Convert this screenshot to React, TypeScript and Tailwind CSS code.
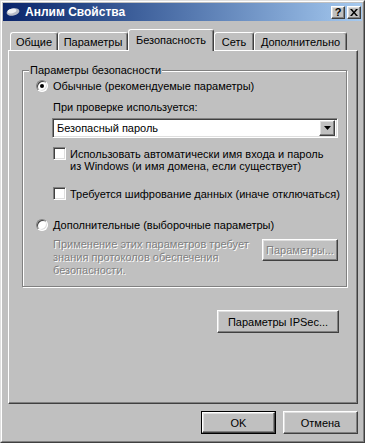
import React from "react";

const raised =
  "border border-t-white border-l-white border-r-[#404040] border-b-[#404040] shadow-[inset_-1px_-1px_0_#808080,inset_1px_1px_0_#dfdfdf]";
const sunken =
  "border border-t-[#808080] border-l-[#808080] border-r-white border-b-white shadow-[inset_1px_1px_0_#404040,inset_-1px_-1px_0_#dfdfdf]";
const disabled = "text-[#808080] [text-shadow:1px_1px_0_#fff]";

function Radio({ checked }: { checked?: boolean }) {
  return (
    <span className="relative flex h-[12px] w-[12px] shrink-0 items-center justify-center rounded-full border border-t-[#808080] border-l-[#808080] border-r-white border-b-white bg-white shadow-[inset_1px_1px_0_#404040,inset_-1px_-1px_0_#dfdfdf]">
      {checked && <span className="h-[4px] w-[4px] rounded-full bg-black" />}
    </span>
  );
}

function Checkbox() {
  return <span className={`h-[13px] w-[13px] shrink-0 bg-white ${sunken}`} />;
}

function Tab({ label, w, active }: { label: string; w: string; active?: boolean }) {
  return (
    <div
      className={`flex items-center justify-center whitespace-nowrap rounded-t-[3px] border border-b-0 border-t-white border-l-white border-r-[#404040] shadow-[inset_-1px_0_0_#808080] bg-[#c0c0c0] ${w} ${
        active ? "relative z-10 -mb-px h-[22px] pb-[2px]" : "h-[18px]"
      }`}
    >
      {label}
    </div>
  );
}

export default function App() {
  return (
    <div className="box-border h-[443px] w-[365px] whitespace-nowrap border border-t-[#dfdfdf] border-l-[#dfdfdf] border-r-[#404040] border-b-[#404040] bg-[#c0c0c0] font-['Liberation_Sans',Arial,sans-serif] text-[11px] leading-[12px] text-black">
      <div className="flex h-full flex-col border border-t-white border-l-white border-r-[#808080] border-b-[#808080] p-px">
        {/* title bar */}
        <div className="flex h-[18px] shrink-0 items-center bg-linear-to-r from-[#0a246a] to-[#a6caf0] pl-[3px] pr-[1px]">
          <svg width="14" height="10" viewBox="0 0 14 10" className="mr-[5px]">
            <ellipse cx="7" cy="5" rx="6.5" ry="3.6" transform="rotate(-12 7 5)" fill="#b8bcc8" />
            <ellipse cx="6" cy="4" rx="4.5" ry="2.2" transform="rotate(-12 6 4)" fill="#eef0f4" />
          </svg>
          <span className="text-[12px] font-bold text-white">Анлим Свойства</span>
          <div className="ml-auto flex gap-[2px]">
            <div className={`flex h-[13px] w-[14px] items-center justify-center bg-[#c0c0c0] text-[11px] font-bold ${raised}`}>?</div>
            <div className={`flex h-[13px] w-[14px] items-center justify-center bg-[#c0c0c0] ${raised}`}>
              <svg width="8" height="7" viewBox="0 0 8 7">
                <path d="M0 0h2l2 2.5L6 0h2L5 3.5 8 7H6L4 4.5 2 7H0l3-3.5z" fill="#000" />
              </svg>
            </div>
          </div>
        </div>

        {/* tabs */}
        <div className="ml-[7px] mt-[8px] flex h-[21px] items-end">
          <Tab label="Общие" w="w-[48px]" />
          <Tab label="Параметры" w="w-[70px]" />
          <Tab label="Безопасность" w="w-[86px]" active />
          <Tab label="Сеть" w="w-[40px]" />
          <Tab label="Дополнительно" w="w-[93px]" />
        </div>

        {/* panel */}
        <div className="ml-[5px] box-border flex h-[354px] w-[350px] flex-col border border-t-white border-l-white border-r-[#404040] border-b-[#404040] shadow-[inset_-1px_-1px_0_#808080]">
          <div className="relative ml-[13px] mt-[19px] box-border flex h-[217px] w-[325px] flex-col border border-[#808080] shadow-[inset_1px_1px_0_#fff,1px_1px_0_#fff]">
            <span className="absolute left-[6px] top-[-7px] bg-[#c0c0c0] px-px">Параметры безопасности</span>

            <div className="ml-[13px] mt-[9px] flex h-[12px] items-center gap-[5px]">
              <Radio checked />
              <span>Обычные (рекомендуемые параметры)</span>
            </div>

            <div className="ml-[30px] mt-[9px] h-[12px]">При проверке используется:</div>

            <div className={`ml-[29px] mt-[5px] box-border flex h-[20px] w-[286px] items-center bg-white pl-[4px] pr-[2px] ${sunken}`}>
              <span>Безопасный пароль</span>
              <div className={`ml-auto box-border flex h-[16px] w-[16px] items-center justify-center bg-[#c0c0c0] ${raised}`}>
                <svg width="7" height="4" viewBox="0 0 7 4">
                  <path d="M0 0h7L3.5 4z" fill="#000" />
                </svg>
              </div>
            </div>

            <div className="ml-[30px] mt-[9px] flex items-start gap-[4px]">
              <Checkbox />
              <span className="mt-px">
                Использовать автоматически имя входа и пароль
                <br />
                из Windows (и имя домена, если существует)
              </span>
            </div>

            <div className="ml-[30px] mt-[15px] flex items-start gap-[4px]">
              <Checkbox />
              <span className="mt-px">Требуется шифрование данных (иначе отключаться)</span>
            </div>

            <div className="ml-[13px] mt-[19px] flex h-[12px] items-center gap-[5px]">
              <Radio />
              <span>Дополнительные (выборочные параметры)</span>
            </div>

            <div className="ml-[30px] mt-[7px] flex items-start">
              <p className={`w-[209px] leading-[13px] ${disabled}`}>
                Применение этих параметров требует
                <br />
                знания протоколов обеспечения
                <br />
                безопасности.
              </p>
              <div className={`mt-px box-border flex h-[22px] w-[76px] items-center justify-center ${raised} ${disabled}`}>
                Параметры...
              </div>
            </div>
          </div>

          <div className="mr-[18px] mt-[23px] flex justify-end">
            <div className={`box-border flex h-[23px] w-[122px] items-center justify-center ${raised}`}>Параметры IPSec...</div>
          </div>
        </div>

        {/* buttons */}
        <div className="mt-[7px] flex justify-end gap-[7px] pr-[4px]">
          <div className="box-border h-[23px] w-[75px] border border-black">
            <div className={`box-border flex h-full w-full items-center justify-center ${raised}`}>OK</div>
          </div>
          <div className={`box-border flex h-[23px] w-[75px] items-center justify-center ${raised}`}>Отмена</div>
        </div>
      </div>
    </div>
  );
}
